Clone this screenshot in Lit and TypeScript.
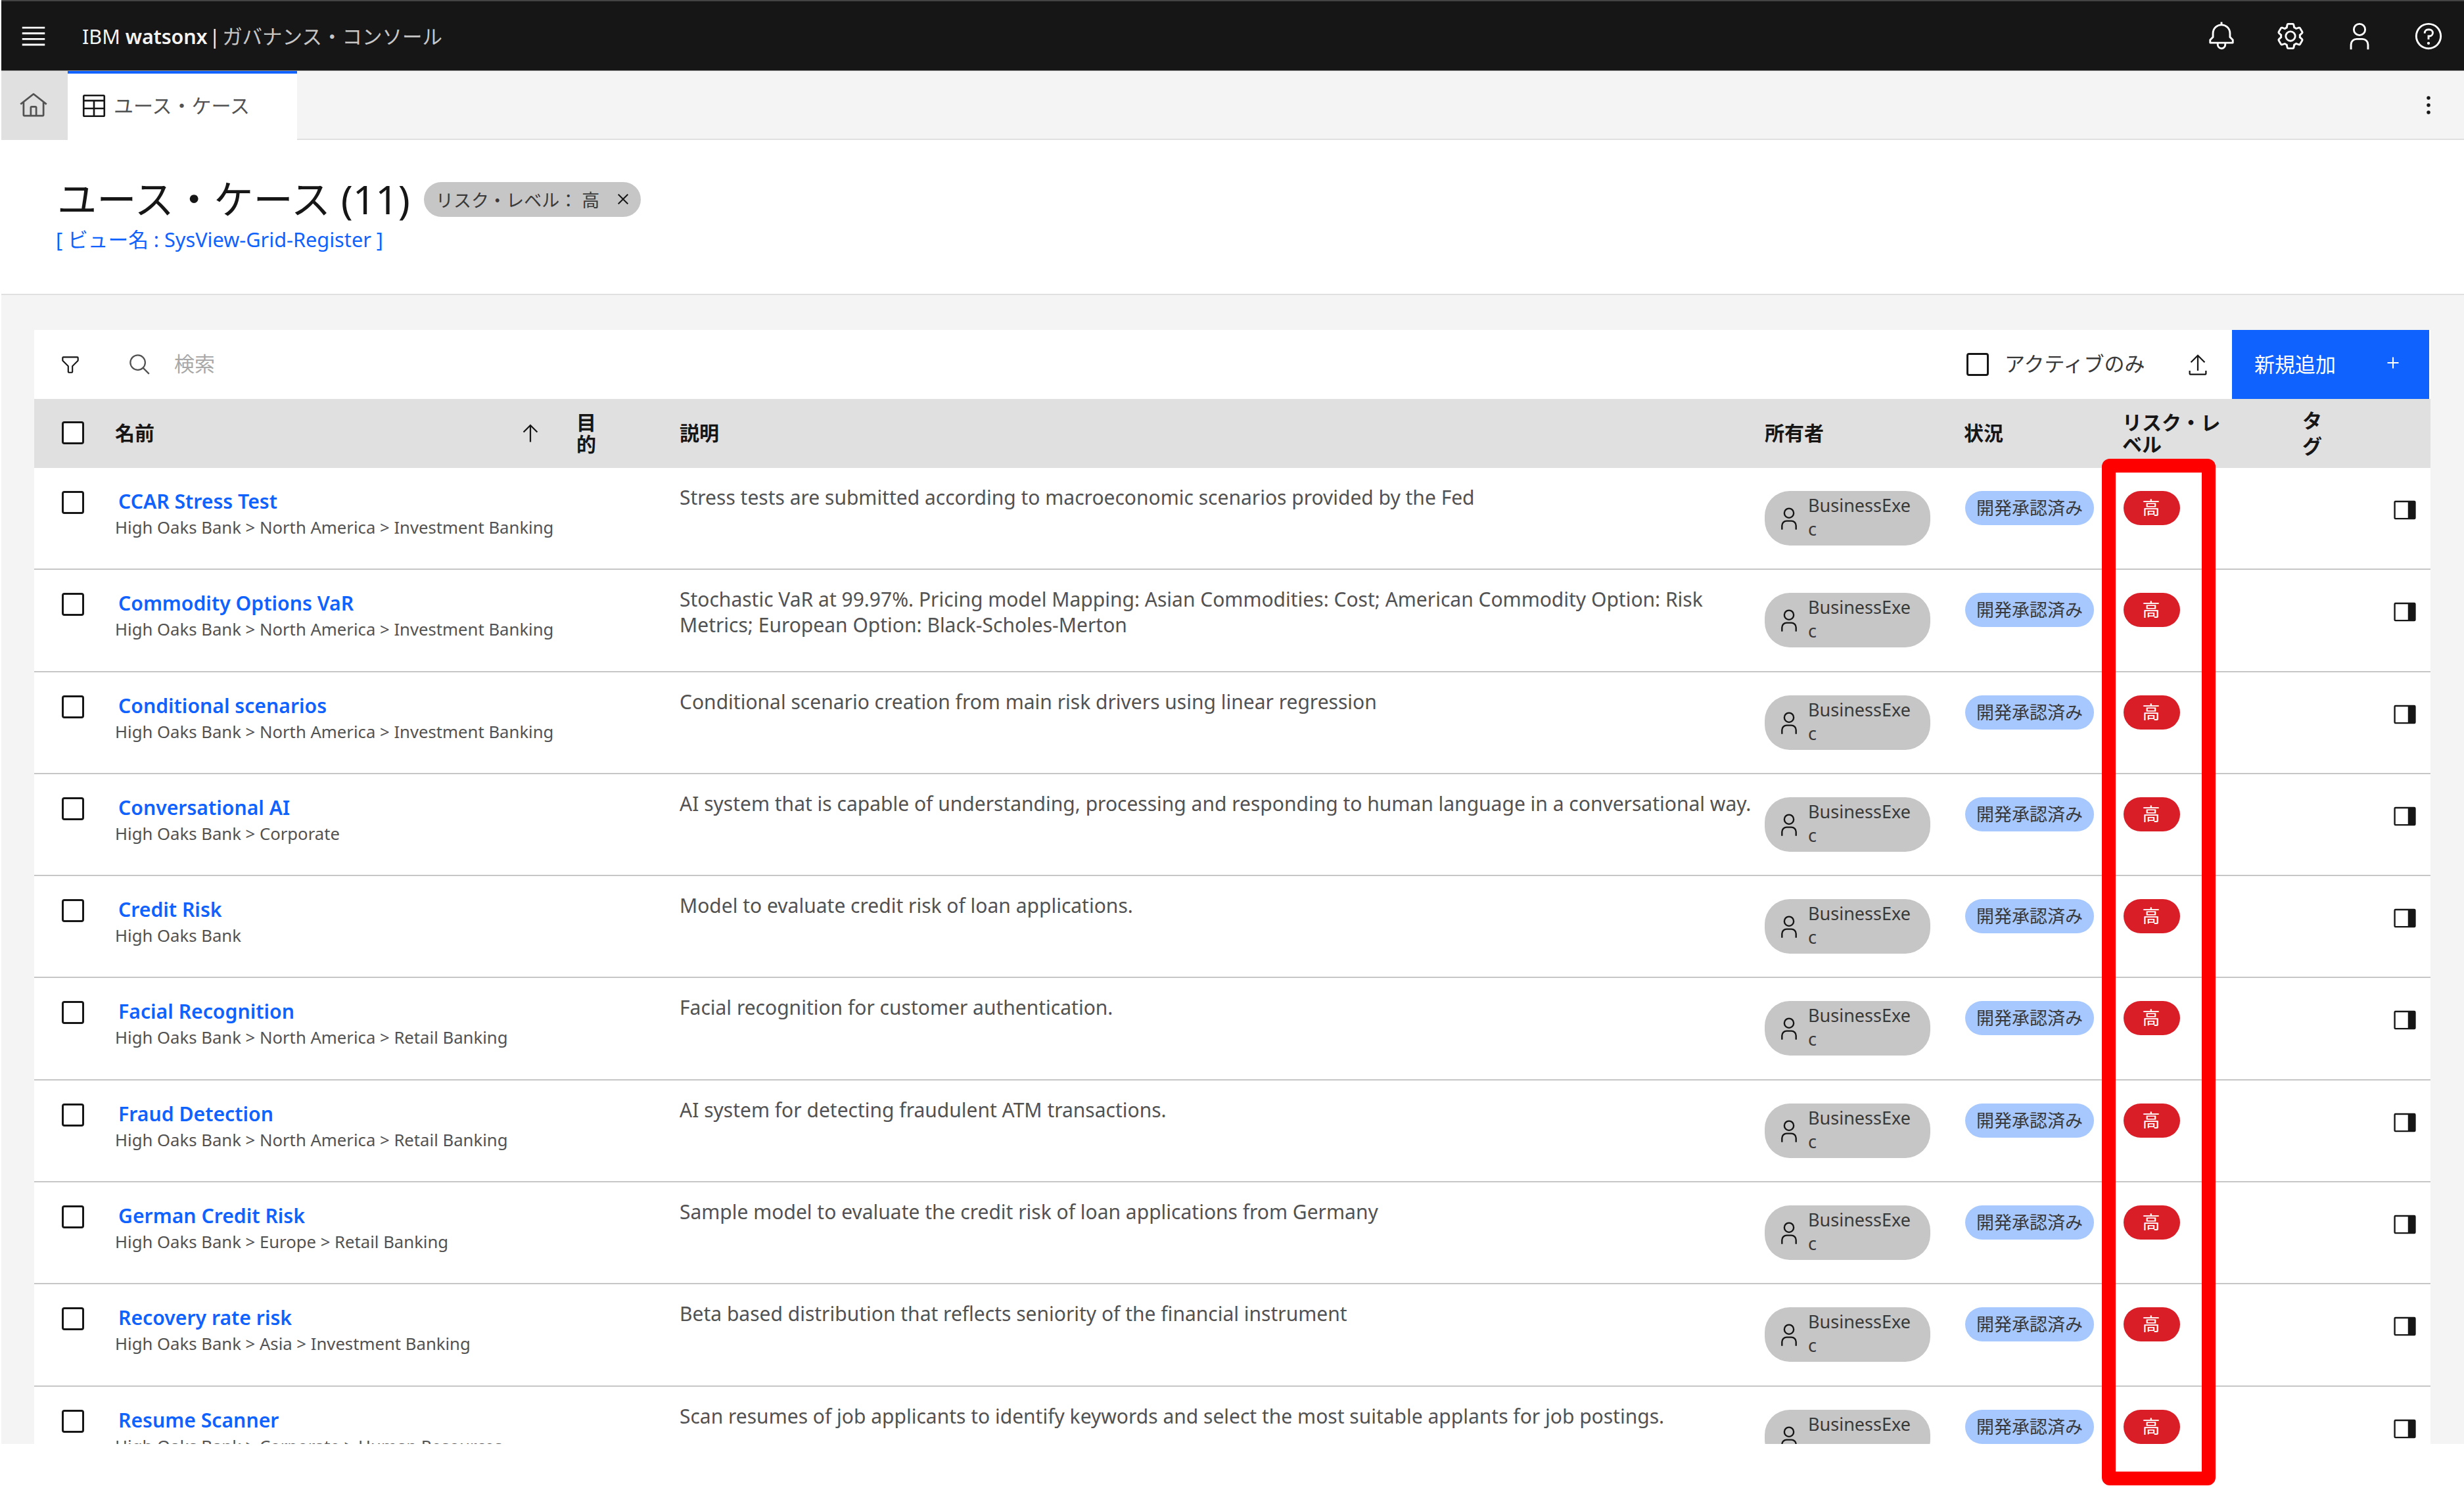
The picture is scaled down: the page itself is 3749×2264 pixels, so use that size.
import { LitElement, html, css, svg } from "lit";
import { customElement } from "lit/decorators.js";

const ic = (inner: unknown, cls = "") => html`<svg class=${cls} viewBox="0 0 32 32" fill="currentColor" aria-hidden="true">${inner}</svg>`;
const icons = {
  menu: svg`<path d="M4 6h24v2H4zM4 12h24v2H4zM4 18h24v2H4zM4 24h24v2H4z"/>`,
  bell: svg`<path d="M28.7071,19.293,26,16.5859V13a10.0136,10.0136,0,0,0-9-9.9492V1H15V3.0508A10.0136,10.0136,0,0,0,6,13v3.5859L3.2929,19.293A1,1,0,0,0,3,20v3a1,1,0,0,0,1,1h7v.7768a5.152,5.152,0,0,0,4.5,5.1987A5.0057,5.0057,0,0,0,21,25V24h7a1,1,0,0,0,1-1V20A1,1,0,0,0,28.7071,19.293ZM19,25a3,3,0,0,1-6,0V24h6Zm8-3H5V20.4141L7.707,17.707A1,1,0,0,0,8,17V13a8,8,0,0,1,16,0v4a1,1,0,0,0,.293.707L27,20.4141Z"/>`,
  gear: svg`<path d="M27,16.76c0-.25,0-.5,0-.76s0-.51,0-.77l1.92-1.68A2,2,0,0,0,29.3,11L26.94,7a2,2,0,0,0-1.73-1,2,2,0,0,0-.64.1l-2.43.82a11.35,11.35,0,0,0-1.31-.75l-.51-2.52a2,2,0,0,0-2-1.61H13.64a2,2,0,0,0-2,1.61l-.51,2.52a11.48,11.48,0,0,0-1.32.75L7.43,6.06A2,2,0,0,0,6.79,6,2,2,0,0,0,5.06,7L2.7,11a2,2,0,0,0,.41,2.51L5,15.24c0,.25,0,.5,0,.76s0,.51,0,.77L3.11,18.45A2,2,0,0,0,2.7,21L5.06,25a2,2,0,0,0,1.73,1,2,2,0,0,0,.64-.1l2.43-.82a11.35,11.35,0,0,0,1.31.75l.51,2.52a2,2,0,0,0,2,1.61h4.72a2,2,0,0,0,2-1.61l.51-2.52a11.48,11.48,0,0,0,1.32-.75l2.42.82a2,2,0,0,0,.64.1,2,2,0,0,0,1.73-1L29.3,21a2,2,0,0,0-.41-2.51ZM25.21,24l-3.43-1.16a8.86,8.86,0,0,1-2.71,1.57L18.36,28H13.64l-.71-3.55a9.36,9.36,0,0,1-2.7-1.57L6.79,24,4.43,20l2.72-2.4a8.9,8.9,0,0,1,0-3.13L4.43,12,6.79,8l3.43,1.16a8.86,8.86,0,0,1,2.71-1.57L13.64,4h4.72l.71,3.55a9.36,9.36,0,0,1,2.7,1.57L25.21,8,27.57,12l-2.72,2.4a8.9,8.9,0,0,1,0,3.13L27.57,20Z"/><path d="M16,22a6,6,0,1,1,6-6A5.94,5.94,0,0,1,16,22Zm0-10a3.91,3.91,0,0,0-4,4,3.91,3.91,0,0,0,4,4,3.91,3.91,0,0,0,4-4A3.91,3.91,0,0,0,16,12Z"/>`,
  user: svg`<path d="M16,4a5,5,0,1,1-5,5,5,5,0,0,1,5-5m0-2a7,7,0,1,0,7,7A7,7,0,0,0,16,2Z"/><path d="M26,30H24V25a5,5,0,0,0-5-5H13a5,5,0,0,0-5,5v5H6V25a7,7,0,0,1,7-7h6a7,7,0,0,1,7,7Z"/>`,
  help: svg`<path d="M16,2A14,14,0,1,0,30,16,14,14,0,0,0,16,2Zm0,26A12,12,0,1,1,28,16,12,12,0,0,1,16,28Z"/><circle cx="16" cy="23.5" r="1.5"/><path d="M17,8H15.5A4.49,4.49,0,0,0,11,12.5V13h2v-.5A2.5,2.5,0,0,1,15.5,10H17a2.5,2.5,0,0,1,0,5H15v4.5h2V17a4.5,4.5,0,0,0,0-9Z"/>`,
  home: svg`<path d="M16.6123,2.2138a1.01,1.01,0,0,0-1.2427,0L1,13.4194l1.2427,1.5717L4,13.6209V26a2.0041,2.0041,0,0,0,2,2H26a2.0037,2.0037,0,0,0,2-2V13.63L29.7573,15,31,13.4282ZM18,26H14V18h4Zm2,0V18a2.0023,2.0023,0,0,0-2-2H14a2.002,2.002,0,0,0-2,2v8H6V12.0615l10-7.79,10,7.8005V26Z"/>`,
  table: svg`<path d="M27,3H5A2,2,0,0,0,3,5V27a2,2,0,0,0,2,2H27a2,2,0,0,0,2-2V5A2,2,0,0,0,27,3Zm0,2V9H5V5ZM17,11H27v7H17Zm-2,7H5V11H15ZM5,20H15v7H5Zm12,7V20H27v7Z"/>`,
  filter: svg`<path d="M18,28H14a2,2,0,0,1-2-2V18.41L4.59,11A2,2,0,0,1,4,9.59V6A2,2,0,0,1,6,4H26a2,2,0,0,1,2,2V9.59A2,2,0,0,1,27.41,11L20,18.41V26A2,2,0,0,1,18,28ZM6,6V9.59l8,8V26h4V17.59l8-8V6Z"/>`,
  search: svg`<path d="M29,27.5859l-7.5521-7.5521a11.0177,11.0177,0,1,0-1.4141,1.4141L27.5859,29ZM4,13a9,9,0,1,1,9,9A9.01,9.01,0,0,1,4,13Z"/>`,
  upload: svg`<path d="M26 24v4H6V24H4v4a2 2 0 0 0 2 2H26a2 2 0 0 0 2-2V24zM6 12 7.411 13.405 15 5.825 15 24 17 24 17 5.825 24.591 13.405 26 12 16 2 6 12z"/>`,
  arrow: svg`<path d="M16 4 6 14 7.41 15.41 15 7.83 15 28 17 28 17 7.83 24.59 15.41 26 14 16 4z"/>`,
  kebab: svg`<circle cx="16" cy="8" r="2"/><circle cx="16" cy="16" r="2"/><circle cx="16" cy="24" r="2"/>`,
  add: svg`<path d="M17 15V8H15v7H8v2h7v7h2V17h7V15z"/>`,
  close: svg`<path d="M24 9.4 22.6 8 16 14.6 9.4 8 8 9.4 14.6 16 8 22.6 9.4 24 16 17.4 22.6 24 24 22.6 17.4 16 24 9.4z"/>`,
  panel: svg`<path d="M28,4H4A2,2,0,0,0,2,6V26a2,2,0,0,0,2,2H28a2,2,0,0,0,2-2V6A2,2,0,0,0,28,4ZM4,6H20V26H4Z"/>`,
};

const rows = [
  ["CCAR Stress Test", "High Oaks Bank > North America > Investment Banking", "Stress tests are submitted according to macroeconomic scenarios provided by the Fed"],
  ["Commodity Options VaR", "High Oaks Bank > North America > Investment Banking", "Stochastic VaR at 99.97%. Pricing model Mapping: Asian Commodities: Cost; American Commodity Option: Risk Metrics; European Option: Black-Scholes-Merton"],
  ["Conditional scenarios", "High Oaks Bank > North America > Investment Banking", "Conditional scenario creation from main risk drivers using linear regression"],
  ["Conversational AI", "High Oaks Bank > Corporate", "AI system that is capable of understanding, processing and responding to human language in a conversational way."],
  ["Credit Risk", "High Oaks Bank", "Model to evaluate credit risk of loan applications."],
  ["Facial Recognition", "High Oaks Bank > North America > Retail Banking", "Facial recognition for customer authentication."],
  ["Fraud Detection", "High Oaks Bank > North America > Retail Banking", "AI system for detecting fraudulent ATM transactions."],
  ["German Credit Risk", "High Oaks Bank > Europe > Retail Banking", "Sample model to evaluate the credit risk of loan applications from Germany"],
  ["Recovery rate risk", "High Oaks Bank > Asia > Investment Banking", "Beta based distribution that reflects seniority of the financial instrument"],
  ["Resume Scanner", "High Oaks Bank > Corporate > Human Resources", "Scan resumes of job applicants to identify keywords and select the most suitable applants for job postings."],
];

@customElement("app-root")
export class AppRoot extends LitElement {
  static styles = css`
    :host {
      display: block;
      position: relative;
      height: 2264px;
      overflow: hidden;
      background: #fff;
      color: #161616;
      font-family: "Noto Sans", "Noto Sans CJK JP", sans-serif;
    }
    svg { display: block; flex: none; }
    .page { height: 2197px; overflow: hidden; padding-left: 2px; box-sizing: border-box; background: #fff; }
    .inner { background: #f4f4f4; height: 100%; }

    .topbar { height: 105px; border-top: 2px solid #444; border-bottom: 1px solid #8d8d8d; background: #161616; color: #fff; display: flex; align-items: center; padding-right: 2px; }
    .tb-btn { width: 105px; height: 105px; display: flex; align-items: center; justify-content: center; flex: none; }
    .tb-btn svg { width: 46px; height: 46px; }
    .tb-btn.menu { width: 97px; }
    .brand { margin-left: 26px; font-size: 30.5px; color: #c6c6c6; white-space: nowrap; flex: 1; padding-bottom: 2px; }
    .brand b { font-weight: 600; color: #f4f4f4; letter-spacing: -0.2px; }
    .brand span { color: #f4f4f4; }
    .brand i { font-style: normal; color: #f4f4f4; margin: 0 3px 0 3px; }

    .tabs { height: 103px; background: #f4f4f4; border-bottom: 2px solid #e0e0e0; display: flex; }
    .home { width: 101px; height: 105px; background: #e0e0e0; color: #525252; display: flex; align-items: center; justify-content: center; flex: none; padding-right: 3px; box-sizing: border-box; }
    .home svg { width: 44px; height: 44px; }
    .tab { width: 349px; height: 105px; box-sizing: border-box; background: #fff; border-top: 4px solid #0f62fe; display: flex; align-items: center; gap: 9px; padding: 0 0 7px 19px; font-size: 30px; color: #525252; flex: none; }
    .tab svg { width: 42px; height: 42px; color: #161616; margin-top: 3px; }
    .tabs .grow { flex: 1; }
    .kebab { width: 105px; height: 103px; display: flex; align-items: center; justify-content: center; margin-right: 2px; }
    .kebab svg { width: 44px; height: 44px; }

    .head { height: 236px; box-sizing: border-box; background: #fff; border-bottom: 2px solid #e0e0e0; padding: 56px 0 0 85px; }
    .title-line { display: flex; align-items: center; gap: 21px; height: 62px; }
    h1 { margin: 0; font-size: 60.3px; font-weight: 400; white-space: nowrap; }
    .chip { height: 53px; width: 330px; margin-top: 6px; box-sizing: border-box; border-radius: 27px; background: #c6c6c6; display: flex; align-items: center; justify-content: space-between; padding: 0 11px 0 18px; font-size: 27px; color: #393939; white-space: nowrap; }
    .chip svg { width: 32px; height: 32px; color: #161616; }
    .view { margin: 13px 0 0 -2px; font-size: 30.7px; line-height: 40px; color: #0f62fe; }

    .main { padding: 53px 51px 0 50px; }
    .toolbar { height: 105px; background: #fff; display: flex; align-items: center; }
    .tool-filter { margin-left: 38px; width: 34px; height: 34px; }
    .tool-search { margin-left: 71px; width: 36px; height: 36px; color: #525252; }
    .ph { margin-left: 34px; font-size: 31px; color: #a8a8a8; flex: 1; padding-bottom: 6px; }
    .cb { width: 34px; height: 35px; box-sizing: border-box; border: 3px solid #161616; border-radius: 4px; background: #fff; flex: none; display: block; }
    .active { margin-left: 24px; font-size: 31px; color: #393939; white-space: nowrap; width: 218px; padding-bottom: 6px; }
    .tool-up { margin-left: 58px; width: 36px; height: 36px; }
    .add { margin-left: 34px; width: 300px; height: 105px; box-sizing: border-box; background: #0f62fe; color: #fff; display: flex; align-items: center; justify-content: space-between; padding: 0 38px 5px 34px; font-size: 31px; margin-right: 2px; }
    .add svg { width: 34px; height: 34px; }

    .grid { display: grid; grid-template-columns: 123px 702px 157px 1651px 305px 241px 274px 140px 53px; }
    .th { background: #e0e0e0; height: 105px; grid-template-rows: 105px; align-items: center; font-size: 30px; font-weight: 700; line-height: 33px; }
    .th > div { box-sizing: border-box; padding-bottom: 2px; }
    .cbcell { padding-left: 42px; }
    .namehead { display: flex; align-items: center; justify-content: space-between; padding-right: 52px; }
    .namehead svg { width: 36px; height: 36px; }
    .narrow { padding-right: 110px; }
    .shift { margin-left: -2px; }
    .risk-h { padding-right: 120px; margin-left: -2px; }
    .tag-h { padding-right: 98px; line-height: 39px; margin-left: -2px; }

    .row { height: 155.3px; box-sizing: border-box; background: #fff; border-bottom: 2px solid #c6c6c6; align-items: start; }
    .row .cbcell { padding-top: 35px; }
    .name { padding-top: 30px; }
    .name a { display: block; margin-left: 5px; font-size: 30.2px; line-height: 42px; font-weight: 600; color: #0f62fe; }
    .name small { display: block; font-size: 25.7px; line-height: 38px; color: #525252; white-space: nowrap; }
    .desc { padding: 25px 20px 0 0; font-size: 30px; line-height: 39px; color: #525252; }
    .pillcell { padding-top: 35px; }
    .owner { width: 252px; height: 83px; box-sizing: border-box; border-radius: 38px; background: #c6c6c6; display: flex; align-items: center; padding: 0 0 3px 18px; gap: 10px; font-size: 27px; line-height: 36px; color: #393939; }
    .owner svg { width: 38px; height: 38px; margin-top: 4px; color: #161616; }
    .owner span { width: 162px; word-break: break-all; }
    .status { width: 196px; height: 52px; box-sizing: border-box; padding-bottom: 3px; border-radius: 26px; background: #a6c8ff; display: flex; align-items: center; justify-content: center; font-size: 27px; color: #393939; white-space: nowrap; }
    .risk { width: 86px; height: 52px; box-sizing: border-box; padding: 0 2px 3px 0; border-radius: 26px; background: #da1e28; color: #fff; display: flex; align-items: center; justify-content: center; font-size: 27px; }
    .act { padding-top: 49px; }
    .act svg { width: 38px; height: 38px; margin-top: -4px; margin-left: -5px; }

    .mark { position: absolute; left: 3198px; top: 698px; width: 173px; height: 1562px; box-sizing: border-box; border: 21px solid #ff0000; border-radius: 12px; }
  `;

  render() {
    return html`
      <div class="page"><div class="inner">
        <div class="topbar">
          <div class="tb-btn menu">${ic(icons.menu)}</div>
          <div class="brand"><span>IBM </span><b>watsonx</b><i>|</i>ガバナンス・コンソール</div>
          <div class="tb-btn">${ic(icons.bell)}</div>
          <div class="tb-btn">${ic(icons.gear)}</div>
          <div class="tb-btn">${ic(icons.user)}</div>
          <div class="tb-btn">${ic(icons.help)}</div>
        </div>
        <div class="tabs">
          <div class="home">${ic(icons.home)}</div>
          <div class="tab">${ic(icons.table)}ユース・ケース</div>
          <div class="grow"></div>
          <div class="kebab">${ic(icons.kebab)}</div>
        </div>
        <div class="head">
          <div class="title-line">
            <h1>ユース・ケース (11)</h1>
            <div class="chip">リスク・レベル： 高 ${ic(icons.close)}</div>
          </div>
          <div class="view">[ ビュー名 : SysView-Grid-Register ]</div>
        </div>
        <div class="main">
          <div class="toolbar">
            ${ic(icons.filter, "tool-filter")}
            ${ic(icons.search, "tool-search")}
            <div class="ph">検索</div>
            <span class="cb"></span>
            <div class="active">アクティブのみ</div>
            ${ic(icons.upload, "tool-up")}
            <div class="add">新規追加 ${ic(icons.add)}</div>
          </div>
          <div class="grid th">
            <div class="cbcell"><span class="cb"></span></div>
            <div class="namehead">名前 ${ic(icons.arrow)}</div>
            <div class="narrow">目的</div>
            <div>説明</div>
            <div>所有者</div>
            <div class="shift">状況</div>
            <div class="risk-h">リスク・レベル</div>
            <div class="tag-h">タグ</div>
            <div></div>
          </div>
          ${rows.map(
            ([n, s, d]) => html`
              <div class="grid row">
                <div class="cbcell"><span class="cb"></span></div>
                <div class="name"><a>${n}</a><small>${s}</small></div>
                <div></div>
                <div class="desc">${d}</div>
                <div class="pillcell"><div class="owner">${ic(icons.user)}<span>BusinessExec</span></div></div>
                <div class="pillcell"><div class="status">開発承認済み</div></div>
                <div class="pillcell"><div class="risk">高</div></div>
                <div></div>
                <div class="act">${ic(icons.panel)}</div>
              </div>
            `
          )}
        </div>
      </div></div>
      <div class="mark"></div>
    `;
  }
}
